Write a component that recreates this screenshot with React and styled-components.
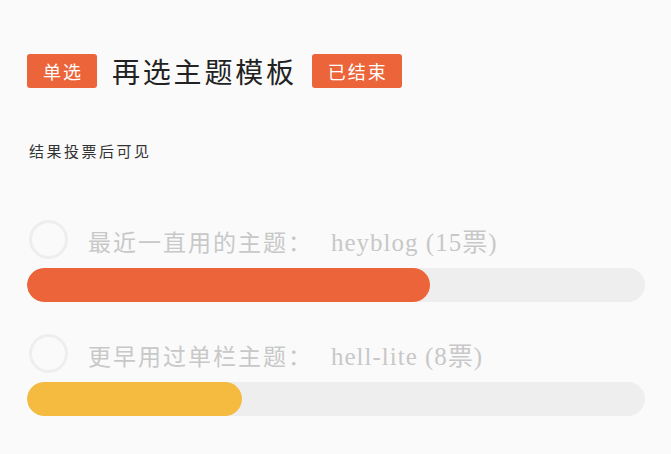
import styled, { createGlobalStyle } from "styled-components";

const GlobalStyle = createGlobalStyle`
  html, body {
    margin: 0;
    padding: 0;
    background: #fafafa;
  }
  body {
    font-family: "Liberation Serif", "Noto Sans CJK SC", serif;
  }
`;

const options = [
  { label: "最近一直用的主题：", name: "heyblog", votes: 15, color: "#ec6439" },
  { label: "更早用过单栏主题：", name: "hell-lite", votes: 8, color: "#f4bb40" },
];

export default function App() {
  const total = options.reduce((sum, o) => sum + o.votes, 0);
  return (
    <>
      <GlobalStyle />
      <Poll>
        <Header>
          <Tag>单选</Tag>
          <Title>再选主题模板</Title>
          <Tag>已结束</Tag>
        </Header>
        <Hint>结果投票后可见</Hint>
        <OptionList>
          {options.map((o) => (
            <Option key={o.name}>
              <OptionRow>
                <Radio />
                <Label>
                  {o.label}
                  <Latin>
                    {o.name} ({o.votes}票)
                  </Latin>
                </Label>
              </OptionRow>
              <Track>
                <Fill $color={o.color} style={{ width: `${(o.votes / total) * 100}%` }} />
              </Track>
            </Option>
          ))}
        </OptionList>
      </Poll>
    </>
  );
}

const Poll = styled.div`
  padding: 54px 26px 0 27px;
`;

const Header = styled.div`
  display: flex;
  align-items: center;
  gap: 15px;
  height: 34px;
`;

const Tag = styled.span`
  display: inline-flex;
  align-items: center;
  height: 34px;
  padding: 0 14px 0 16px;
  background: #ec6439;
  color: #fff;
  border-radius: 3px;
  font-size: 18px;
  letter-spacing: 2px;
`;

const Title = styled.h1`
  margin: 0;
  font-size: 28px;
  font-weight: 400;
  letter-spacing: 2.8px;
  color: #222;
`;

const Hint = styled.p`
  margin: 54px 0 0 2px;
  font-size: 15px;
  line-height: 20px;
  letter-spacing: 2.5px;
  color: #333;
`;

const OptionList = styled.div`
  display: flex;
  flex-direction: column;
  gap: 32px;
  margin-top: 58px;
`;

const Option = styled.div`
  display: flex;
  flex-direction: column;
  gap: 9px;
`;

const OptionRow = styled.div`
  display: flex;
  align-items: center;
  gap: 20px;
  padding-left: 2px;
`;

const Radio = styled.span`
  width: 33px;
  height: 33px;
  border: 3px solid #eeeeee;
  border-radius: 50%;
  flex-shrink: 0;
`;

const Label = styled.span`
  font-size: 23px;
  letter-spacing: 2px;
  color: #c8c8c8;
`;

const Latin = styled.span`
  margin-left: 18px;
  font-size: 25px;
  letter-spacing: 1px;
`;

const Track = styled.div`
  height: 34px;
  background: #eeeeee;
  border-radius: 17px;
  overflow: hidden;
`;

const Fill = styled.div`
  height: 100%;
  background: ${(p) => p.$color};
  border-radius: 17px;
`;
